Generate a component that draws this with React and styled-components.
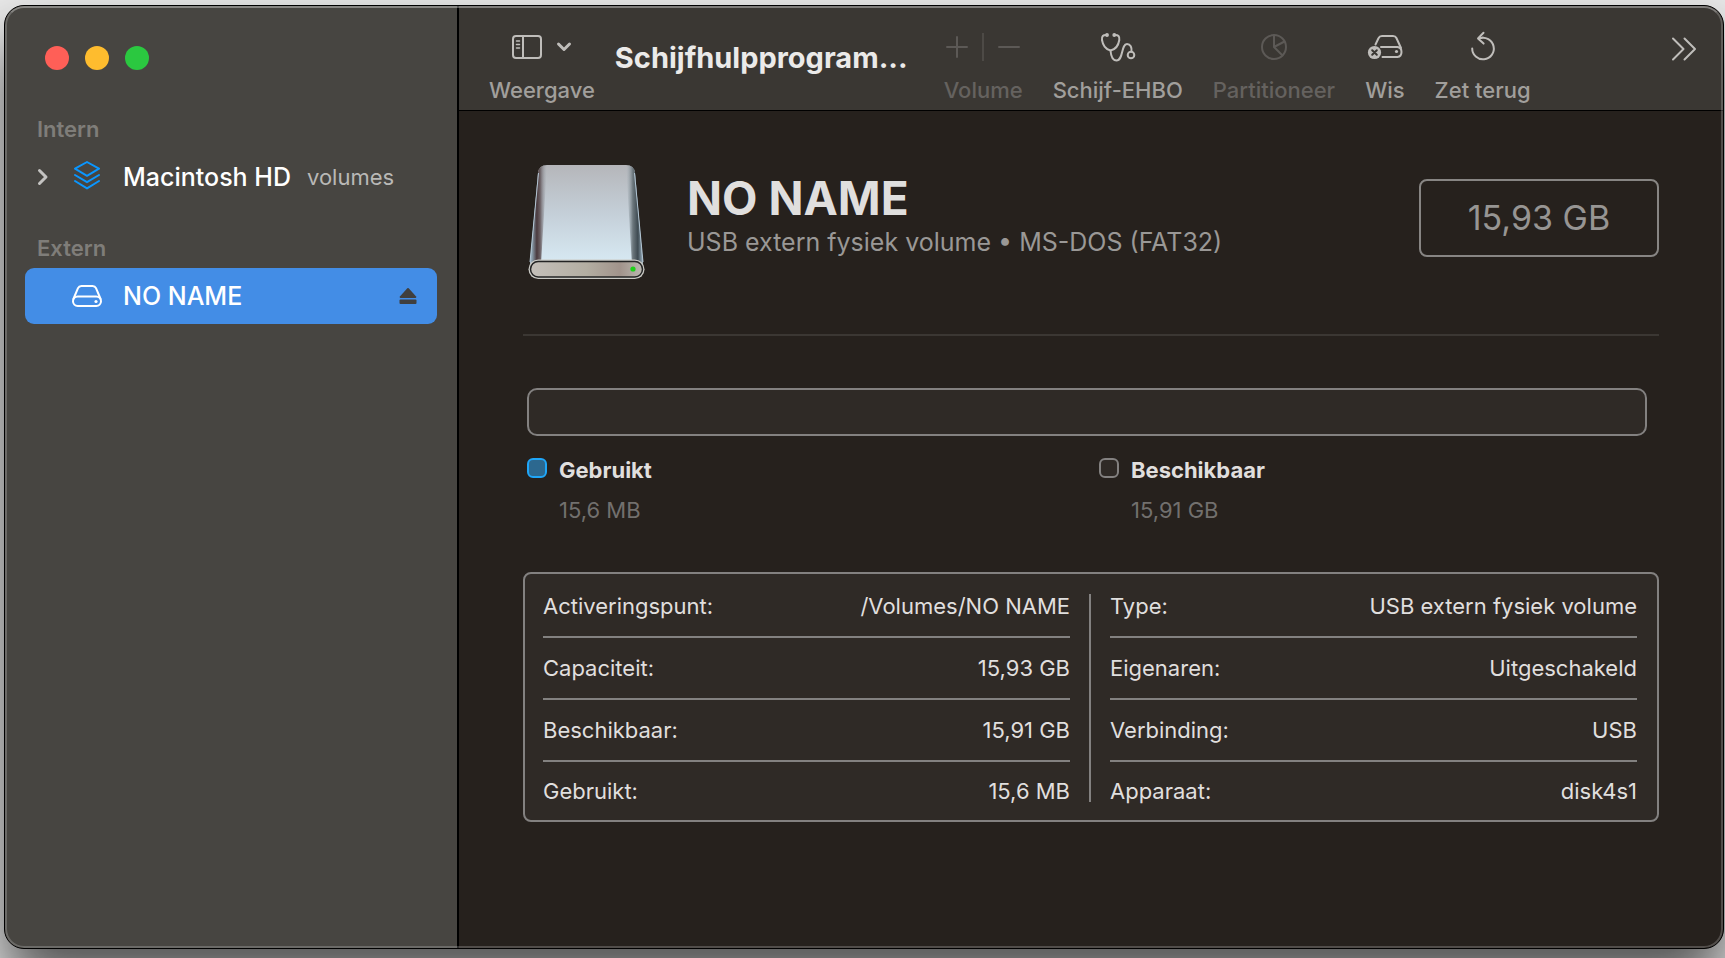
import { useState } from 'react';
import styled, { createGlobalStyle, css } from 'styled-components';

const GlobalStyle = createGlobalStyle`
  * {
    box-sizing: border-box;
  }
  body {
    margin: 0;
    background: #e9e9e9;
    font-family: Inter, 'Liberation Sans', sans-serif;
    -webkit-font-smoothing: antialiased;
  }
  button {
    background: none;
    border: none;
    padding: 0;
    color: inherit;
    font: inherit;
  }
  svg {
    display: block;
  }
`;

const Desktop = styled.div`
  min-height: 100vh;
  padding: 5px 1px 9px 4px;
  display: flex;
  overflow: hidden;
`;
const Window = styled.div`
  position: relative;
  flex: 1;
  display: flex;
  border: 1px solid #000;
  border-radius: 20px;
  background: #26211d;
  box-shadow: 0 36px 60px rgba(0, 0, 0, 0.65);
  overflow: hidden;

  &::after {
    content: '';
    position: absolute;
    inset: 0;
    border: 2px solid rgba(255, 255, 255, 0.2);
    border-top-color: rgba(255, 255, 255, 0.35);
    border-radius: 19px;
    pointer-events: none;
  }
`;

/* Sidebar */
const Sidebar = styled.aside`
  flex: 0 0 454px;
  padding: 40px 20px 20px;
  border-right: 2px solid #000;
  background: #474541;
`;
const TrafficLights = styled.div`
  display: flex;
  gap: 16px;
  padding-left: 20px;
  margin-bottom: 40px;
`;
const TrafficLight = styled.button`
  width: 24px;
  height: 24px;
  border-radius: 50%;
  background: ${({ color }) => color};
`;
const SidebarSection = styled.section`
  margin-bottom: 24px;
`;
const SidebarHeading = styled.h2`
  margin: 0;
  padding-left: 12px;
  font-size: 22px;
  font-weight: 600;
  line-height: 39px;
  color: #7f7d79;
`;
const SidebarRow = styled.div`
  display: flex;
  align-items: center;
  height: 56px;
  padding: 0 20px 0 12px;
  border-radius: 9px;
  color: #fff;
  background: ${({ $selected }) => ($selected ? '#438de6' : 'transparent')};
`;
const Disclosure = styled.button`
  width: 35px;
  color: #c4c3c1;
`;
const DisclosureSpace = styled.span`
  width: 35px;
`;
const VolumeButton = styled.button`
  flex: 1;
  display: flex;
  align-items: center;
  text-align: left;
`;
const VolumeIcon = styled.span`
  display: flex;
  justify-content: center;
  width: 30px;
  margin-right: 21px;
`;
const VolumeName = styled.span`
  font-size: 25px;
  font-weight: 500;
`;
const VolumeHint = styled.span`
  margin-left: 16px;
  font-size: 22px;
  color: #b9b8b6;
`;
const EjectButton = styled.button`
  color: #403f3e;
`;

/* Toolbar */
const Main = styled.main`
  flex: 1;
  min-width: 0;
`;
const Toolbar = styled.header`
  display: flex;
  height: 105px;
  padding: 22px 26px 0 30px;
  border-bottom: 1px solid #000;
  background: #3a3733;
`;
const ToolbarItem = styled.button`
  display: flex;
  flex-direction: column;
  align-items: center;
  height: 76px;
  margin-right: 30px;
  font-size: 22px;
  font-weight: 500;
  line-height: 28px;
  white-space: nowrap;
  color: #a19f9c;
  ${({ disabled }) =>
    disabled &&
    css`
      color: #65625f;
    `}
`;
const ToolbarGroup = styled(ToolbarItem).attrs({ as: 'div' })`
  color: #65625f;
`;
const ToolbarGlyph = styled.span`
  display: flex;
  align-items: center;
  gap: 14px;
  height: 38px;
  margin-bottom: 10px;
  color: ${({ $dim }) => ($dim ? '#5c5956' : '#bfbdba')};
`;
const GroupSeparator = styled.span`
  width: 2px;
  height: 28px;
  background: #4d4a46;
`;
const WindowTitle = styled.h1`
  margin: 0 36px 0 -10px;
  font-size: 29px;
  font-weight: 700;
  line-height: 60px;
  white-space: nowrap;
  color: #ebeae9;
`;
const OverflowButton = styled.button`
  align-self: flex-start;
  height: 42px;
  margin-left: auto;
  color: #bfbdba;
`;

/* Details */
const Content = styled.div`
  padding: 54px 64px 40px;
`;
const DiskHeader = styled.div`
  display: flex;
  align-items: center;
  height: 115px;
  margin-bottom: 54px;
  padding-left: 5px;
`;
const DiskTitles = styled.div`
  flex: 1;
  margin: 0 0 14px 42px;
`;
const DiskName = styled.h2`
  margin: 0;
  font-size: 46px;
  font-weight: 700;
  line-height: 52px;
  color: #e0dfde;
`;
const DiskKind = styled.p`
  margin: 0;
  font-size: 25px;
  line-height: 36px;
  color: #9a9896;
`;
const Capacity = styled.div`
  width: 240px;
  margin-bottom: 10px;
  border: 2px solid #878583;
  border-radius: 8px;
  font-size: 34px;
  line-height: 74px;
  text-align: center;
  color: #979593;
`;
const Divider = styled.hr`
  height: 2px;
  margin: 0 0 52px;
  border: none;
  background: #3b3733;
`;
const Usage = styled.section`
  padding: 0 12px 0 4px;
  margin-bottom: 42px;
`;
const UsageBar = styled.div`
  height: 48px;
  border: 2px solid #838180;
  border-radius: 10px;
  background: #2f2a26;
  overflow: hidden;
`;
const UsageFill = styled.div`
  height: 100%;
  background: #2c688f;
`;
const Legend = styled.div`
  display: grid;
  grid-template-columns: 1fr 1fr;
  gap: 24px;
  margin-top: 14px;
`;
const LegendItem = styled.div`
  display: grid;
  grid-template-columns: 20px 1fr;
  column-gap: 12px;
  line-height: 40px;
  font-size: 22px;
`;
const Swatch = styled.span`
  width: 20px;
  height: 20px;
  margin-top: 8px;
  border: 2px solid ${({ $used }) => ($used ? '#1fa6f8' : '#838180')};
  border-radius: 6px;
  background: ${({ $used }) => ($used ? '#2c688f' : '#2f2a26')};
`;
const LegendLabel = styled.span`
  font-weight: 700;
  color: #e0dfde;
`;
const LegendValue = styled.span`
  grid-column: 2;
  color: #72706e;
`;
const InfoCard = styled.section`
  display: grid;
  grid-template-columns: 1fr 2px 1fr;
  column-gap: 19px;
  padding: 2px 20px 0 18px;
  border: 2px solid #838180;
  border-radius: 8px;
  background: #2f2a26;
`;
const InfoSeparator = styled.div`
  margin: 18px 0;
  background: #838180;
`;
const InfoTable = styled.table`
  width: 100%;
  border-spacing: 0;
  font-size: 22px;
  color: #e0dfde;

  th,
  td {
    height: 62px;
    padding: 0;
    border-bottom: 2px solid #838180;
    font-weight: 400;
    text-align: left;
    white-space: nowrap;
  }
  td {
    text-align: right;
  }
  tr:last-child th,
  tr:last-child td {
    height: 58px;
    border-bottom: none;
  }
`;

const stroke = {
  fill: 'none',
  stroke: 'currentColor',
  strokeLinecap: 'round',
  strokeLinejoin: 'round'
};

const ChevronRight = () => (
  <svg width="12" height="18" viewBox="0 0 12 18" {...stroke} strokeWidth="3">
    <path d="M2.500 2.500l6.500 6.500-6.500 6.500" />
  </svg>
);
const LayersIcon = () => (
  <svg
    width="28"
    height="32"
    viewBox="0 0 28 32"
    {...stroke}
    stroke="#0a96ff"
    strokeWidth="2"
  >
    <path d="M2 7.700L14 1l12 6.700L14 14.800z" />
    <path d="M2 14l12 7.200L26 14M2 20l12 7.400L26 20" />
  </svg>
);
const DriveIcon = () => (
  <svg width="30" height="24" viewBox="0 0 30 24" {...stroke} strokeWidth="2">
    <path d="M1.400 15L6 4.200Q7 2 9.400 2h11.200q2.400 0 3.400 2.200L28.600 15" />
    <rect x="1" y="12.500" width="28" height="9.500" rx="4.700" />
    <circle cx="24" cy="17.500" r="1.600" fill="currentColor" stroke="none" />
  </svg>
);
const EjectIcon = () => (
  <svg width="18" height="18" viewBox="0 0 18 18" fill="currentColor">
    <path d="M8.300 1.300q.7-.6 1.400 0l7.400 8.200q.7 1.500-.8 1.500H1.700q-1.500 0-.8-1.500z" />
    <rect x=".5" y="12.500" width="17" height="4.500" rx="1" />
  </svg>
);
const SidebarIcon = () => (
  <svg width="30" height="24" viewBox="0 0 30 24" {...stroke} strokeWidth="2">
    <rect x="1" y="1" width="28" height="22" rx="3" />
    <path d="M11 1v22" />
    <path d="M4.500 6h3M4.500 9.500h3M4.500 13h3" strokeWidth="1.500" />
  </svg>
);
const ChevronDown = () => (
  <svg width="16" height="12" viewBox="0 0 16 12" {...stroke} strokeWidth="3">
    <path d="M2.500 3L8 8.500 13.500 3" />
  </svg>
);
const PlusIcon = () => (
  <svg width="22" height="22" viewBox="0 0 22 22" {...stroke} strokeWidth="2">
    <path d="M11 1v20M1 11h20" />
  </svg>
);
const MinusIcon = () => (
  <svg width="22" height="22" viewBox="0 0 22 22" {...stroke} strokeWidth="2">
    <path d="M1 11h20" />
  </svg>
);
const StethoscopeIcon = () => (
  <svg width="36" height="30" viewBox="0 0 36 30" {...stroke} strokeWidth="2">
    <path d="M7 3C3 2.500 1.500 4.500 2 8c.7 4.500 3.500 9.500 8.500 10.500C15.500 17.500 18.500 13 19.300 8c.5-3.500-1-5.500-5-5" />
    <path d="M10.500 18.500C11 25 13 28.500 16.500 28.500c7 0 4.500-16.500 10.500-16.500 3.500 0 5 3.500 4.500 7.500" />
    <circle cx="7" cy="3" r="1.200" fill="currentColor" strokeWidth="1.500" />
    <circle cx="14.300" cy="3" r="1.200" fill="currentColor" strokeWidth="1.500" />
    <circle cx="31" cy="23" r="3.300" />
  </svg>
);
const PartitionIcon = () => (
  <svg width="28" height="28" viewBox="0 0 28 28" {...stroke} strokeWidth="2">
    <circle cx="14" cy="14" r="12" />
    <path d="M14 2v12l8.500 8.500M14 14l10.500-5.500" />
  </svg>
);
const EraseIcon = () => (
  <svg width="36" height="26" viewBox="0 0 36 26" {...stroke} strokeWidth="2">
    <path d="M8.500 10.500L11.600 4Q12.500 2 15 2h11q2.500 0 3.400 2L34 14" />
    <path d="M14 13h16.500Q34.500 13.500 34.500 18t-4 5H15.500" />
    <circle cx="29.500" cy="17.500" r="1.600" fill="currentColor" stroke="none" />
    <circle cx="7.500" cy="18.500" r="6.600" fill="currentColor" stroke="none" />
    <path d="M5.200 16.200l4.600 4.600M9.800 16.200l-4.600 4.600" stroke="#3a3733" />
  </svg>
);
const RestoreIcon = () => (
  <svg width="26" height="32" viewBox="0 0 26 32" {...stroke} strokeWidth="2">
    <path d="M2.200 17.500A10.800 10.800 0 1 0 9.500 7.300L13 6.600" />
    <path d="M13.500 1.700L8 7.400l5.600 5.200" />
  </svg>
);
const OverflowIcon = () => (
  <svg width="26" height="24" viewBox="0 0 26 24" {...stroke} strokeWidth="2">
    <path d="M2 1.500L12.500 12 2 22.500M13.500 1.500L24 12 13.500 22.500" />
  </svg>
);
const DiskImage = () => (
  <svg width="117" height="117" viewBox="0 0 117 117">
    <defs>
      <linearGradient id="face" x1="0" y1="0" x2="0" y2="1">
        <stop offset="0" stopColor="#b5b6ba" />
        <stop offset="0.5" stopColor="#c5d0d9" />
        <stop offset="1" stopColor="#d8eaf4" />
      </linearGradient>
      <linearGradient id="edgeLeft" x1="0" y1="0" x2="1" y2="0">
        <stop offset="0" stopColor="#a9bccb" />
        <stop offset="0.15" stopColor="#8394a1" />
        <stop offset="0.4" stopColor="#4a3a3e" />
        <stop offset="0.6" stopColor="#6b6165" />
        <stop offset="1" stopColor="#a4acb4" stopOpacity="0" />
      </linearGradient>
      <linearGradient id="edgeRight" x1="0" y1="0" x2="1" y2="0">
        <stop offset="0" stopColor="#a9b5bd" stopOpacity="0" />
        <stop offset="0.4" stopColor="#6c777d" />
        <stop offset="0.7" stopColor="#3e4a51" />
        <stop offset="1" stopColor="#9db4c4" />
      </linearGradient>
      <linearGradient id="front" x1="0" y1="0" x2="1" y2="0">
        <stop offset="0" stopColor="#c4c0ba" />
        <stop offset="0.5" stopColor="#b3aea2" />
        <stop offset="0.8" stopColor="#a1938b" />
        <stop offset="1" stopColor="#bab8b0" />
      </linearGradient>
    </defs>
    <path
      d="M10 9Q11 1 19 1h79q8 0 9 8l8 92H2z"
      fill="url(#face)"
    />
    <path d="M10 9Q11 1 19 1L13 100H2z" fill="url(#edgeLeft)" />
    <path d="M98 1q8 0 9 8l8 92H104z" fill="url(#edgeRight)" />
    <path d="M10.500 9L2 98" stroke="#b3c6d4" fill="none" />
    <path d="M106.500 9L115 98" stroke="#b3c6d4" fill="none" />
    <rect x="0.500" y="95.500" width="116" height="19.500" rx="9.700" fill="#c9c9c4" />
    <rect
      x="2.500"
      y="97.500"
      width="112"
      height="15.500"
      rx="7.700"
      fill="url(#front)"
      stroke="#232424"
      strokeWidth="1.500"
    />
    <circle cx="105" cy="105" r="2.600" fill="#1fd01a" />
  </svg>
);

const leftInfo = [
  ['Activeringspunt:', '/Volumes/NO NAME'],
  ['Capaciteit:', '15,93 GB'],
  ['Beschikbaar:', '15,91 GB'],
  ['Gebruikt:', '15,6 MB']
];
const rightInfo = [
  ['Type:', 'USB extern fysiek volume'],
  ['Eigenaren:', 'Uitgeschakeld'],
  ['Verbinding:', 'USB'],
  ['Apparaat:', 'disk4s1']
];

function Info({ rows }) {
  return (
    <InfoTable>
      <tbody>
        {rows.map(([label, value]) => (
          <tr key={label}>
            <th scope="row">{label}</th>
            <td>{value}</td>
          </tr>
        ))}
      </tbody>
    </InfoTable>
  );
}

function Tool({ label, icon, disabled }) {
  return (
    <ToolbarItem disabled={disabled}>
      <ToolbarGlyph $dim={disabled}>{icon}</ToolbarGlyph>
      {label}
    </ToolbarItem>
  );
}

export default function App() {
  const [selected, setSelected] = useState('noname');
  const usedPercent = 0;

  return (
    <>
      <GlobalStyle />
      <Desktop>
        <Window>
          <Sidebar>
            <TrafficLights>
              <TrafficLight color="#ff5f57" aria-label="Sluit" />
              <TrafficLight color="#febc2e" aria-label="Minimaliseer" />
              <TrafficLight color="#2bc840" aria-label="Vergroot" />
            </TrafficLights>
            <SidebarSection>
              <SidebarHeading>Intern</SidebarHeading>
              <SidebarRow $selected={selected === 'macintosh'}>
                <Disclosure aria-label="Toon volumes">
                  <ChevronRight />
                </Disclosure>
                <VolumeButton onClick={() => setSelected('macintosh')}>
                  <VolumeIcon>
                    <LayersIcon />
                  </VolumeIcon>
                  <VolumeName>Macintosh HD</VolumeName>
                  <VolumeHint>volumes</VolumeHint>
                </VolumeButton>
              </SidebarRow>
            </SidebarSection>
            <SidebarSection>
              <SidebarHeading>Extern</SidebarHeading>
              <SidebarRow $selected={selected === 'noname'}>
                <DisclosureSpace />
                <VolumeButton onClick={() => setSelected('noname')}>
                  <VolumeIcon>
                    <DriveIcon />
                  </VolumeIcon>
                  <VolumeName>NO NAME</VolumeName>
                </VolumeButton>
                <EjectButton aria-label="Verwijder">
                  <EjectIcon />
                </EjectButton>
              </SidebarRow>
            </SidebarSection>
          </Sidebar>

          <Main>
            <Toolbar>
              <Tool
                label="Weergave"
                icon={
                  <>
                    <SidebarIcon />
                    <ChevronDown />
                  </>
                }
              />
              <WindowTitle>Schijfhulpprogram...</WindowTitle>
              <ToolbarGroup>
                <ToolbarGlyph $dim>
                  <button disabled aria-label="Voeg volume toe">
                    <PlusIcon />
                  </button>
                  <GroupSeparator />
                  <button disabled aria-label="Verwijder volume">
                    <MinusIcon />
                  </button>
                </ToolbarGlyph>
                Volume
              </ToolbarGroup>
              <Tool label="Schijf-EHBO" icon={<StethoscopeIcon />} />
              <Tool label="Partitioneer" icon={<PartitionIcon />} disabled />
              <Tool label="Wis" icon={<EraseIcon />} />
              <Tool label="Zet terug" icon={<RestoreIcon />} />
              <OverflowButton aria-label="Meer">
                <OverflowIcon />
              </OverflowButton>
            </Toolbar>

            <Content>
              <DiskHeader>
                <DiskImage />
                <DiskTitles>
                  <DiskName>NO NAME</DiskName>
                  <DiskKind>USB extern fysiek volume • MS-DOS (FAT32)</DiskKind>
                </DiskTitles>
                <Capacity>15,93 GB</Capacity>
              </DiskHeader>
              <Divider />
              <Usage>
                <UsageBar>
                  <UsageFill style={{ width: `${usedPercent}%` }} />
                </UsageBar>
                <Legend>
                  <LegendItem>
                    <Swatch $used />
                    <LegendLabel>Gebruikt</LegendLabel>
                    <LegendValue>15,6 MB</LegendValue>
                  </LegendItem>
                  <LegendItem>
                    <Swatch />
                    <LegendLabel>Beschikbaar</LegendLabel>
                    <LegendValue>15,91 GB</LegendValue>
                  </LegendItem>
                </Legend>
              </Usage>
              <InfoCard>
                <Info rows={leftInfo} />
                <InfoSeparator />
                <Info rows={rightInfo} />
              </InfoCard>
            </Content>
          </Main>
        </Window>
      </Desktop>
    </>
  );
}
